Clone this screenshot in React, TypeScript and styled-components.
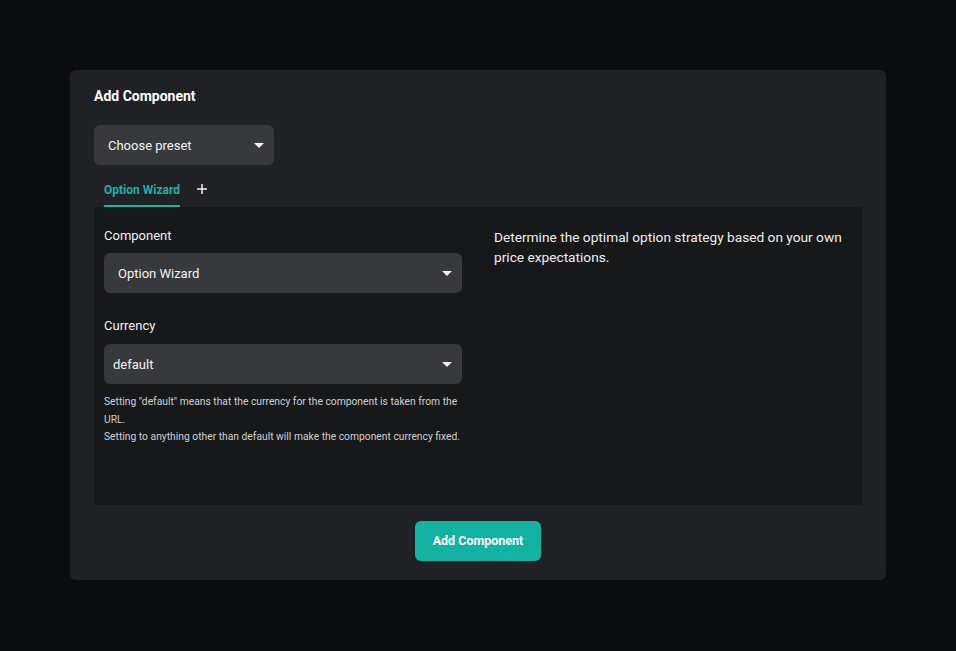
import React from 'react'
import styled, { createGlobalStyle } from 'styled-components'

const GlobalStyle = createGlobalStyle`
  html, body {
    margin: 0;
    padding: 0;
    background: #0b0c0e;
    font-family: Roboto, 'Liberation Sans', sans-serif;
    color: #e8e8ea;
  }
`

const Page = styled.div`
  min-height: 651px;
  padding: 70px;
  box-sizing: border-box;
`

const Card = styled.div`
  width: 816px;
  background: #202124;
  border-radius: 6px;
  padding: 17px 24px 19px;
  box-sizing: border-box;
  display: flex;
  flex-direction: column;
`

const Title = styled.h2`
  margin: 0;
  font-size: 14px;
  font-weight: 700;
  line-height: 18px;
  color: #ffffff;
`

const SelectBox = styled.div<{ $width?: string; $pad?: number }>`
  width: ${(p) => p.$width || '100%'};
  height: 40px;
  box-sizing: border-box;
  background: #38393c;
  border-radius: 6px;
  display: flex;
  align-items: center;
  justify-content: space-between;
  padding: 0 10px 0 ${(p) => p.$pad ?? 14}px;
  font-size: 13px;
  color: #f2f2f4;
`

const Caret = styled.span`
  width: 0;
  height: 0;
  border-left: 5px solid transparent;
  border-right: 5px solid transparent;
  border-top: 5px solid #f0f0f0;
`

const PresetWrap = styled.div`
  margin-top: 20px;
`

const Tabs = styled.div`
  display: flex;
  align-items: center;
  margin-top: 9px;
  padding-left: 10px;
  gap: 16px;
`

const Tab = styled.div<{ $active?: boolean }>`
  font-size: 12px;
  font-weight: 700;
  line-height: 14px;
  padding: 9px 0 8px;
  color: ${(p) => (p.$active ? '#19b3a3' : '#ccc')};
  border-bottom: 2px solid ${(p) => (p.$active ? '#19b3a3' : 'transparent')};
`

const PlusIcon = styled.svg`
  width: 12px;
  height: 12px;
  margin-top: -3px;
`

const Panel = styled.div`
  background: #17181a;
  height: 298px;
  box-sizing: border-box;
  padding: 19px 10px 0;
  display: grid;
  grid-template-columns: 1fr 1fr;
  column-gap: 32px;
  align-items: start;
`

const Column = styled.div`
  display: flex;
  flex-direction: column;
`

const Label = styled.div<{ $top?: number; $bottom?: number }>`
  font-size: 13px;
  line-height: 20px;
  color: #f0f0f2;
  margin-top: ${(p) => p.$top ?? 0}px;
  margin-bottom: ${(p) => p.$bottom ?? 7}px;
`

const Help = styled.div`
  font-size: 10.3px;
  line-height: 17.5px;
  color: #cfd0d2;
  margin-top: 9px;
`

const Description = styled.p`
  margin: 1px 0 0;
  font-size: 13.7px;
  line-height: 20px;
  color: #eeeef0;
`

const Footer = styled.div`
  display: flex;
  justify-content: center;
  margin-top: 16px;
`

const PrimaryButton = styled.button`
  height: 40px;
  padding: 0 18px 2px;
  border: none;
  border-radius: 6px;
  background: #13b3a4;
  color: #ffffff;
  font-family: Roboto, 'Liberation Sans', sans-serif;
  font-size: 12.5px;
  font-weight: 700;
  cursor: pointer;
`

export default function App() {
  return (
    <>
      <GlobalStyle />
      <Page>
        <Card>
          <Title>Add Component</Title>
          <PresetWrap>
            <SelectBox $width="180px">
              Choose preset
              <Caret />
            </SelectBox>
          </PresetWrap>
          <Tabs>
            <Tab $active>Option Wizard</Tab>
            <PlusIcon viewBox="0 0 12 12">
              <path d="M6 1v10M1 6h10" stroke="#f2f2f2" strokeWidth="1.5" />
            </PlusIcon>
          </Tabs>
          <Panel>
            <Column>
              <Label>Component</Label>
              <SelectBox>
                Option Wizard
                <Caret />
              </SelectBox>
              <Label $top={23} $bottom={8}>Currency</Label>
              <SelectBox $pad={9}>
                default
                <Caret />
              </SelectBox>
              <Help>
                Setting "default" means that the currency for the component is taken from the URL.
                <br />
                Setting to anything other than default will make the component currency fixed.
              </Help>
            </Column>
            <Column>
              <Description>
                Determine the optimal option strategy based on your own price expectations.
              </Description>
            </Column>
          </Panel>
          <Footer>
            <PrimaryButton>Add Component</PrimaryButton>
          </Footer>
        </Card>
      </Page>
    </>
  )
}
